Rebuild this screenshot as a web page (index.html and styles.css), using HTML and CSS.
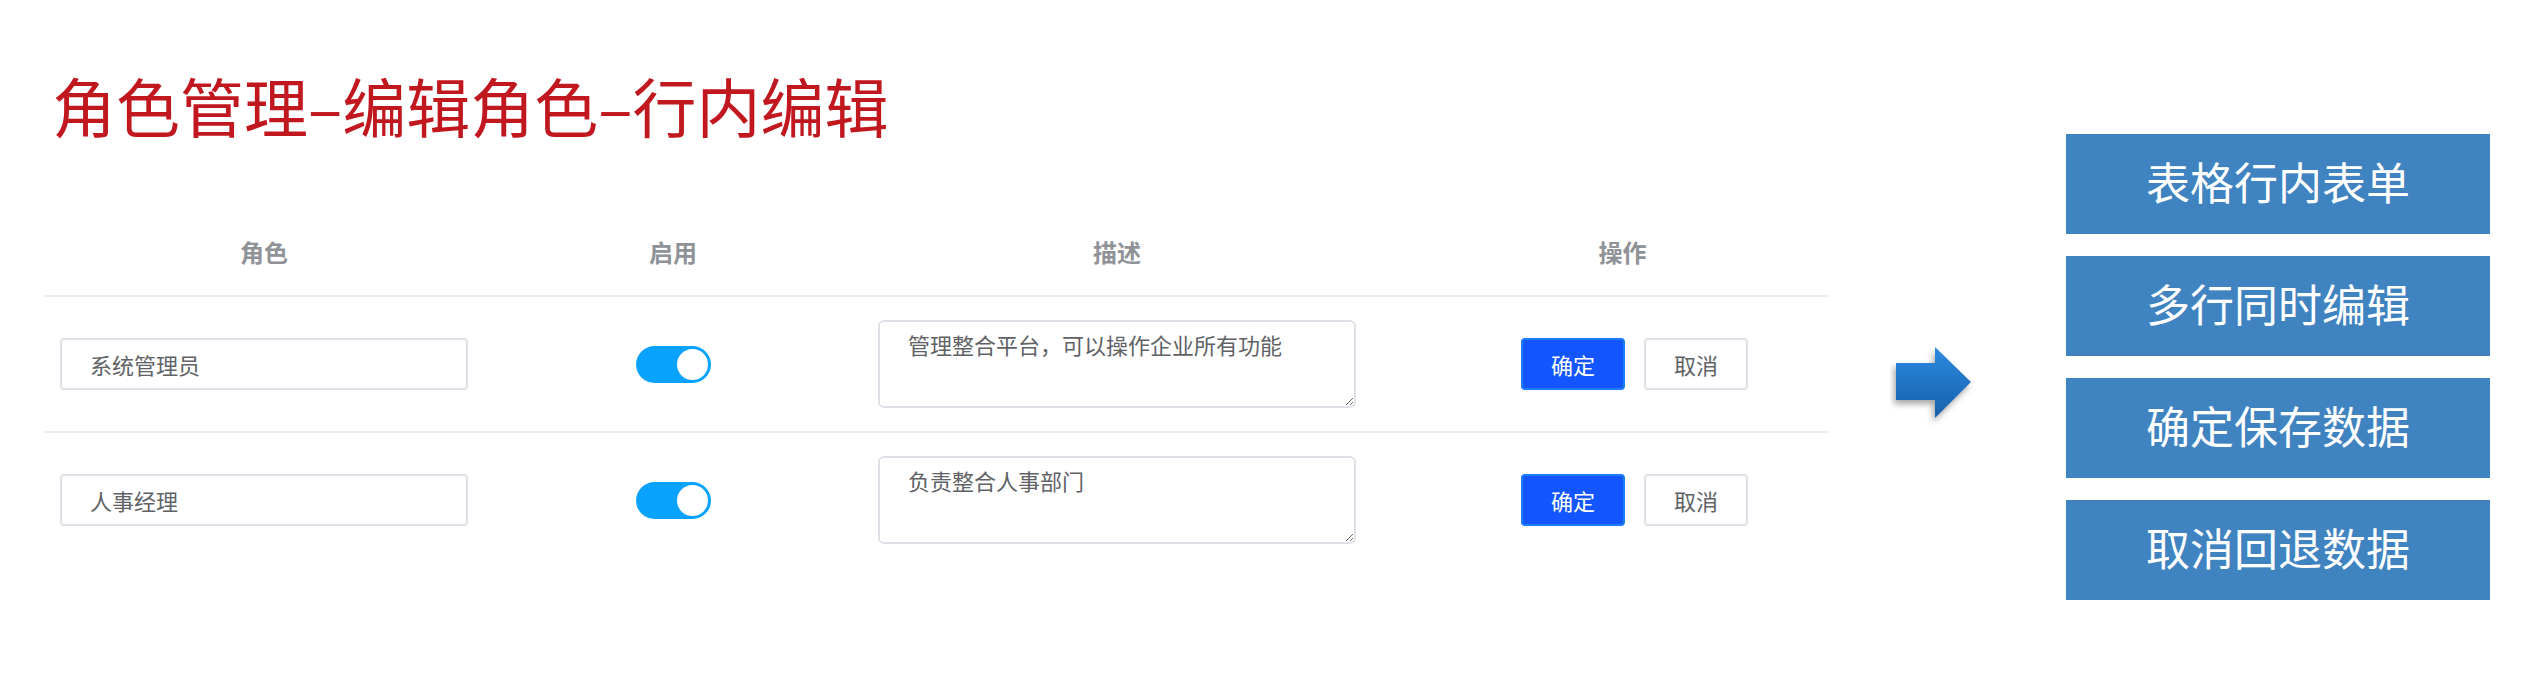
FILE: index.html
```html
<!DOCTYPE html>
<html lang="zh-CN">
<head>
<meta charset="utf-8">
<title>角色管理–编辑角色–行内编辑</title>
<link rel="stylesheet" href="styles.css">
</head>
<body>
<div class="page">
  <section class="left">
    <h1 class="title">角色管理–编辑角色–行内编辑</h1>
    <div class="table">
      <div class="tr head">
        <div class="th">角色</div>
        <div class="th">启用</div>
        <div class="th">描述</div>
        <div class="th th-op">操作</div>
      </div>
      <div class="tr row line">
        <div class="td td-name"><input class="input" type="text" value="系统管理员"></div>
        <div class="td td-switch"><span class="switch"><span class="knob"></span></span></div>
        <div class="td td-desc"><textarea class="textarea">管理整合平台，可以操作企业所有功能</textarea></div>
        <div class="td td-op"><button class="btn btn-primary">确定</button><button class="btn btn-default">取消</button></div>
      </div>
      <div class="tr row">
        <div class="td td-name"><input class="input" type="text" value="人事经理"></div>
        <div class="td td-switch"><span class="switch"><span class="knob"></span></span></div>
        <div class="td td-desc"><textarea class="textarea">负责整合人事部门</textarea></div>
        <div class="td td-op"><button class="btn btn-primary">确定</button><button class="btn btn-default">取消</button></div>
      </div>
    </div>
  </section>
  <div class="arrow">
    <svg width="90" height="90" viewBox="0 0 90 90">
      <defs>
        <linearGradient id="ag" x1="0" y1="0" x2="0" y2="1">
          <stop offset="0" stop-color="#2c8ae0"/>
          <stop offset="1" stop-color="#1860ab"/>
        </linearGradient>
        <filter id="sh" x="-30%" y="-30%" width="160%" height="160%">
          <feDropShadow dx="-2" dy="4" stdDeviation="3" flood-color="#000" flood-opacity="0.35"/>
        </filter>
      </defs>
      <polygon points="6,23 45,23 45,7 81,42 45,78 45,60 6,60" fill="url(#ag)" filter="url(#sh)"/>
    </svg>
  </div>
  <ul class="steps">
    <li class="step">表格行内表单</li>
    <li class="step">多行同时编辑</li>
    <li class="step">确定保存数据</li>
    <li class="step">取消回退数据</li>
  </ul>
</div>
</body>
</html>
```
FILE: styles.css
```css
html, body {
  margin: 0;
  padding: 0;
  background: #ffffff;
}
body {
  font-family: "Noto Sans CJK SC", "Noto Sans", sans-serif;
  width: 2542px;
  height: 700px;
  overflow: hidden;
}
.page {
  display: flex;
  align-items: flex-start;
}
.left {
  padding-left: 44px;
  width: 1785px;
  flex: none;
}
.title {
  margin: 72px 0 0 8px;
  font-size: 64px;
  line-height: 64px;
  height: 64px;
  font-weight: 400;
  color: #c1171f;
  white-space: nowrap;
}
.table {
  margin-top: 71px;
}
.tr {
  display: grid;
  grid-template-columns: 440px 378px 510px 457px;
  align-items: center;
}
.head {
  height: 88px;
  border-bottom: 2px solid #eaecf2;
}
.th {
  text-align: center;
  font-size: 24px;
  font-weight: 700;
  color: #8f9297;
}
.th-op {
  padding-left: 44px;
}
.row {
  height: 134px;
}
.line {
  border-bottom: 2px solid #eaecf2;
}
.td {
  display: flex;
  align-items: center;
}
.td-name, .td-desc {
  padding-left: 16px;
}
.td-switch {
  justify-content: center;
}
.td-op {
  padding-left: 149px;
  gap: 19px;
}
.input {
  box-sizing: border-box;
  width: 408px;
  height: 52px;
  border: 2px solid #dfe1e8;
  border-radius: 4px;
  padding: 0 28px;
  font-family: "Noto Sans CJK SC", sans-serif;
  font-size: 22px;
  color: #606266;
  background: #fff;
  outline: none;
}
.textarea {
  box-sizing: border-box;
  width: 478px;
  height: 88px;
  border: 2px solid #dfe1e8;
  border-radius: 6px;
  padding: 6px 28px;
  font-family: "Noto Sans CJK SC", sans-serif;
  font-size: 22px;
  line-height: 33px;
  color: #606266;
  background: #fff;
  outline: none;
  display: block;
}
.switch {
  position: relative;
  display: block;
  width: 75px;
  height: 37px;
  border-radius: 19px;
  background: #0aa2ff;
}
.knob {
  position: absolute;
  top: 3px;
  right: 3px;
  width: 31px;
  height: 31px;
  border-radius: 50%;
  background: #ffffff;
}
.btn {
  box-sizing: border-box;
  width: 104px;
  height: 52px;
  border-radius: 4px;
  font-family: "Noto Sans CJK SC", sans-serif;
  font-size: 22px;
  padding: 0;
  cursor: pointer;
}
.btn-primary {
  background: #1356ff;
  border: 2px solid #1f7bff;
  color: #ffffff;
}
.btn-default {
  background: #ffffff;
  border: 2px solid #dfe1e8;
  color: #606266;
}
.arrow {
  flex: none;
  margin: 340px 0 0 61px;
  width: 90px;
  height: 90px;
}
.arrow svg {
  display: block;
}
.steps {
  list-style: none;
  margin: 134px 0 0 86px;
  padding: 0;
  display: flex;
  flex-direction: column;
  gap: 22px;
}
.step {
  box-sizing: border-box;
  width: 424px;
  height: 100px;
  background: #3f83c1;
  color: #ffffff;
  font-size: 44px;
  font-weight: 400;
  display: flex;
  align-items: center;
  justify-content: center;
  padding-bottom: 6px;
}
```
